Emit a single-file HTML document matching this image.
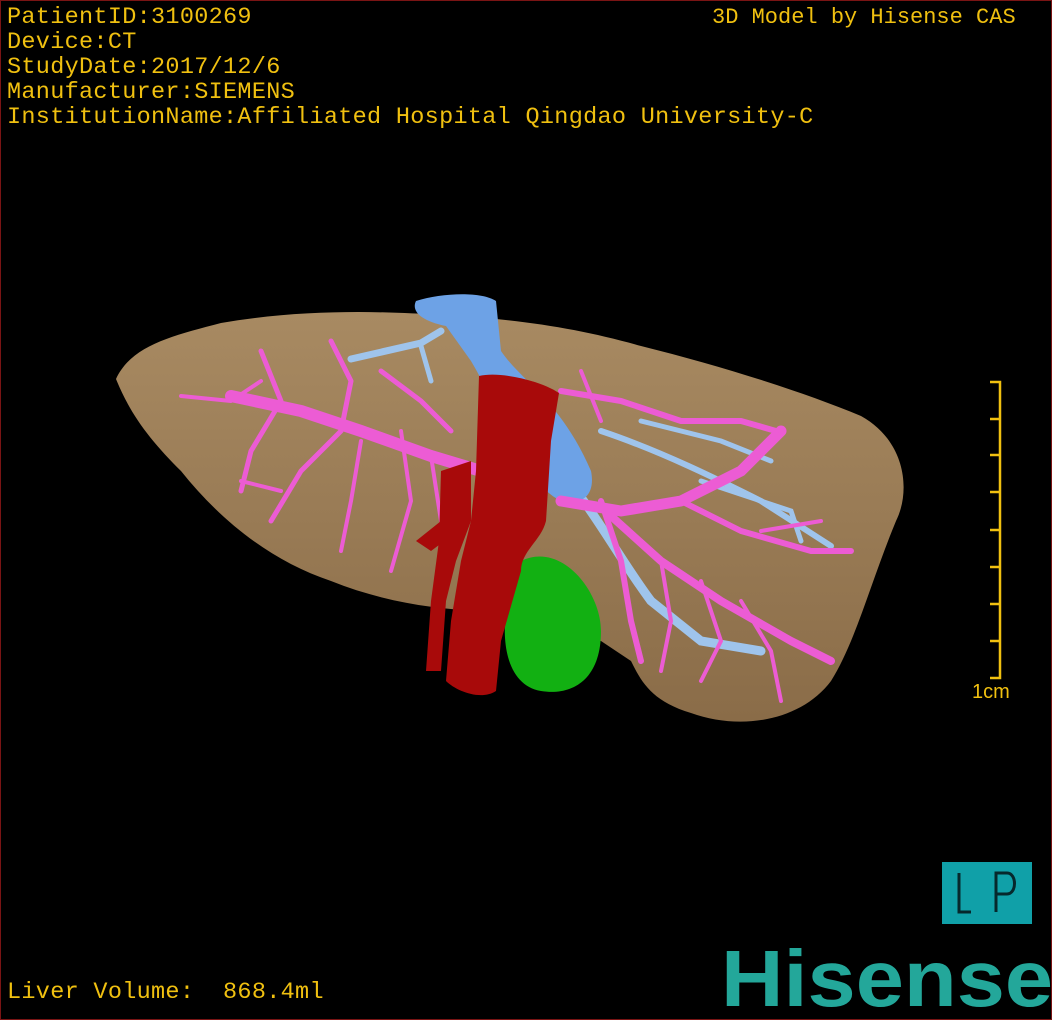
<!DOCTYPE html>
<html><head><meta charset="utf-8"><style>
html,body{margin:0;padding:0;background:#000;}
#c{position:relative;width:1052px;height:1020px;background:#000;overflow:hidden;box-sizing:border-box;border:1px solid #7a1414;}
.t{position:absolute;color:#f0c010;font-family:"Liberation Mono",monospace;font-size:23.5px;line-height:25px;white-space:pre;letter-spacing:0.3px;}
</style></head><body><div id="c">
<div class="t" style="left:6px;top:4px">PatientID:3100269
Device:CT
StudyDate:2017/12/6
Manufacturer:SIEMENS
InstitutionName:Affiliated Hospital Qingdao University-C</div>
<div class="t" style="left:711px;top:4px;font-size:22px;letter-spacing:0">3D Model by Hisense CAS</div>
<div class="t" style="left:6px;top:979px">Liver Volume:  868.4ml</div>
<svg width="1052" height="1020" style="position:absolute;left:0;top:0">
<defs><linearGradient id="lg" x1="0" y1="0" x2="0" y2="1"><stop offset="0" stop-color="#a88a62"/><stop offset="1" stop-color="#8a6c48"/></linearGradient></defs>
<path d="M115,378 C130,345 170,335 220,322 C300,308 380,310 440,314 C520,318 580,328 640,345 C720,365 800,390 860,415 C905,440 910,490 895,520 C870,580 855,640 830,680 C800,720 740,730 690,712 C650,700 640,680 630,660 L600,640 C560,625 520,615 480,610 C430,608 380,600 330,580 C270,560 220,520 180,470 C150,440 130,415 115,378 Z" fill="url(#lg)"/>
<g stroke="#9fc4ec" fill="none" stroke-linecap="round">
<path d="M350,358 L420,342 L440,330" stroke-width="7"/>
<path d="M420,345 L430,380" stroke-width="5"/>
<path d="M560,470 C600,520 620,560 650,600 L700,640 L760,650" stroke-width="9"/>
<path d="M600,430 C660,450 720,480 760,500 L830,545" stroke-width="6"/>
<path d="M640,420 L720,440 L770,460" stroke-width="5"/>
<path d="M700,480 L790,510 L800,540" stroke-width="5"/>
</g>
<path d="M415,300 C440,292 480,290 495,300 L500,350 C520,380 560,400 590,470 C595,495 580,505 560,500 C520,480 500,410 470,360 L445,325 C420,320 410,310 415,300 Z" fill="#6da2e6"/>
<g stroke="#ec5cd4" fill="none" stroke-linecap="round" stroke-linejoin="round">
<path d="M230,395 L300,410 L360,430 L430,455 L480,470" stroke-width="12"/>
<path d="M560,500 L620,510 L680,500 L740,470 L780,430" stroke-width="11"/>
<path d="M610,515 L660,560 L720,600 L790,640 L830,660" stroke-width="8"/>
<path d="M600,500 L620,560 L630,620 L640,660" stroke-width="6"/>
<path d="M560,390 L620,400 L680,420 L740,420 L775,430" stroke-width="6"/>
<path d="M680,500 L740,530 L810,550 L850,550" stroke-width="6"/>
<path d="M260,350 L280,400 L250,450 L240,490" stroke-width="5"/>
<path d="M330,340 L350,380 L340,430 L300,470 L270,520" stroke-width="5"/>
<path d="M180,395 L230,400 L260,380" stroke-width="4"/>
<path d="M360,440 L350,500 L340,550" stroke-width="4"/>
<path d="M400,430 L410,500 L390,570" stroke-width="4"/>
<path d="M430,455 L440,520" stroke-width="4"/>
<path d="M380,370 L420,400 L450,430" stroke-width="5"/>
<path d="M740,600 L770,650 L780,700" stroke-width="4"/>
<path d="M700,580 L720,640 L700,680" stroke-width="4"/>
<path d="M660,560 L670,620 L660,670" stroke-width="4"/>
<path d="M760,530 L820,520" stroke-width="4"/>
<path d="M240,480 L280,490" stroke-width="4"/>
<path d="M580,370 L600,420" stroke-width="4"/>
</g>
<path d="M520,560 C560,540 600,590 600,630 C600,680 570,695 540,690 C510,685 500,650 505,610 C508,585 510,570 520,560 Z" fill="#12b012"/>
<g fill="#a80a0a">
<path d="M478,375 C500,370 540,380 558,392 L550,440 L545,520 C540,540 520,550 520,570 L500,640 L495,690 C480,700 455,690 445,680 L450,620 L460,560 L470,520 L475,470 Z"/>
<path d="M440,470 L470,460 L470,520 L455,560 L445,600 L440,670 L425,670 L430,600 L438,540 Z"/>
<path d="M415,540 L440,520 L450,535 L430,550 Z"/>
</g>
<g stroke="#f0c010" stroke-width="2.5" fill="none">
<path d="M989,381 H999 V677 H989"/>
<path d="M989,418 H999 M989,454 H999 M989,491 H999 M989,529 H999 M989,566 H999 M989,603 H999 M989,640 H999"/>
</g>
<text x="971" y="697" fill="#f0c010" font-family="Liberation Sans,sans-serif" font-size="20">1cm</text>
<rect x="941" y="861" width="90" height="62" fill="#10a0a8"/>
<g stroke="#06282c" stroke-width="3" fill="none">
<path d="M958,872 V911 H970"/>
<path d="M995,911 V872 H1006 C1016,872 1016,893 1006,893 H995"/>
</g>
<text x="720" y="1005" fill="#23a79a" font-family="Liberation Sans,sans-serif" font-weight="bold" font-size="80" textLength="332" lengthAdjust="spacingAndGlyphs">Hisense</text>
</svg>
</div></body></html>
